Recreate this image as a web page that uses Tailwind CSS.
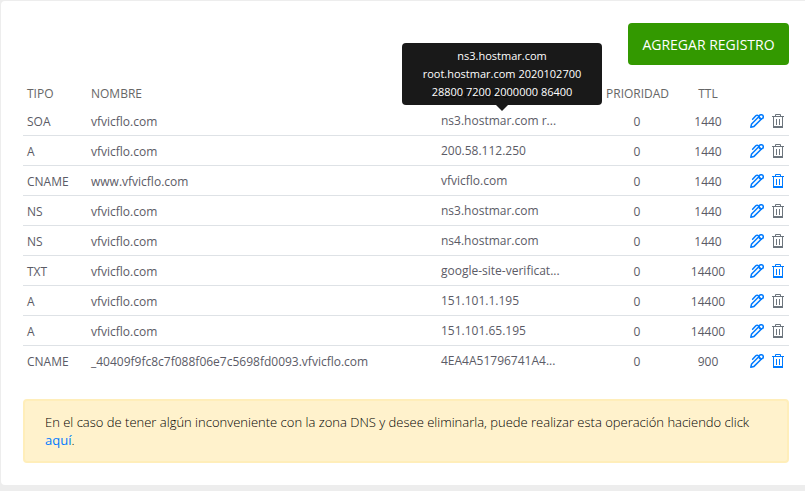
<!DOCTYPE html>
<html lang="es">
<head>
<meta charset="utf-8">
<meta name="viewport" content="width=device-width, initial-scale=1">
<title>Zona DNS</title>
<script src="https://cdn.jsdelivr.net/npm/@tailwindcss/browser@4"></script>
</head>
<body class="min-h-screen bg-[#ededed] pl-px pt-px font-['Open_Sans','Noto_Sans',sans-serif] text-[13px] text-[#5b5b66]">
<svg class="hidden" aria-hidden="true">
  <symbol id="pen" viewBox="0 0 14 14">
    <g fill="none" stroke="currentColor" stroke-width="1.5" stroke-linejoin="round" stroke-linecap="round">
      <path d="M.8 13.2 1.6 10 8.8 2.8M4 12.4 11.2 5.2M.8 13.2 4 12.4"/>
      <circle cx="11.2" cy="2.8" r="2.1"/>
      <path d="M8.8 2.8 11.2 5.2M2.6 5.3 5.8 1.8Q7.2 .4 8.9 2.2"/>
    </g>
  </symbol>
  <symbol id="trash" viewBox="0 0 12 14">
    <path fill="none" stroke="currentColor" d="M0 2.5H12M3.5 2.5V.5H8.5V2.5M1.5 2.5V13H10.5V2.5M4.5 5V11M7.5 5V11"/>
    <path fill="currentColor" d="M1 12H11V14H1Z"/>
  </symbol>
</svg>
<main class="rounded-l-[4px] bg-white py-[22px] pl-[22px] pr-4">
  <div class="flex justify-end">
    <button type="button" class="h-[42px] min-w-[161px] rounded-[4px] bg-[#339900] px-3 text-[14px] text-white">AGREGAR REGISTRO</button>
  </div>
  <table class="mt-4 w-full table-fixed border-collapse">
    <colgroup><col class="w-16"><col><col class="w-[165px]"><col class="w-[70px]"><col class="w-[72px]"><col class="w-[45px]"></colgroup>
    <thead>
      <tr class="h-6 text-left text-[12px] text-[#666]">
        <th class="px-1 pt-0.5 font-normal">TIPO</th><th class="px-1 pt-0.5 font-normal">NOMBRE</th><th class="px-1 pt-0.5 font-normal">CONTENIDO</th><th class="px-1 pt-0.5 text-center font-normal">PRIORIDAD</th><th class="px-1 pt-0.5 text-center font-normal">TTL</th><th class="px-1" aria-label="Acciones"></th>
      </tr>
    </thead>
    <tbody id="records" class="text-[12px]"></tbody>
  </table>
  <p class="mt-6 rounded-[4px] border-2 border-[#ffeeba] bg-[#fff2cc] px-5 py-3 font-light leading-[18px] text-black">En el caso de tener algún inconveniente con la zona DNS y desee eliminarla, puede realizar esta operación haciendo click <a href="#" class="font-normal text-[#007bff]">aquí</a>.</p>
</main>
<script>
const records = [
  ['SOA', 'vfvicflo.com', 'ns3.hostmar.com r...', 1440, false],
  ['A', 'vfvicflo.com', '200.58.112.250', 1440, false],
  ['CNAME', 'www.vfvicflo.com', 'vfvicflo.com', 1440, true],
  ['NS', 'vfvicflo.com', 'ns3.hostmar.com', 1440, false],
  ['NS', 'vfvicflo.com', 'ns4.hostmar.com', 1440, false],
  ['TXT', 'vfvicflo.com', 'google-site-verificat...', 14400, true],
  ['A', 'vfvicflo.com', '151.101.1.195', 14400, false],
  ['A', 'vfvicflo.com', '151.101.65.195', 14400, false],
  ['CNAME', '_40409f9fc8c7f088f06e7c5698fd0093.vfvicflo.com', '4EA4A51796741A4...', 900, true],
];
const tooltip = `<span role="tooltip" class="absolute bottom-full left-1/2 mb-[7px] w-[200px] -translate-x-1/2 rounded-[4px] bg-black/90 px-4 py-1 text-center text-[11px] whitespace-normal leading-[18px] text-white">ns3.hostmar.com root.hostmar.com 2020102700 28800 7200 2000000 86400<svg class="absolute left-1/2 top-full -translate-x-1/2" width="12" height="6" viewBox="0 0 12 6" fill="#000" fill-opacity=".9"><path d="M0 0H12L6 6Z"/></svg></span>`;
document.getElementById('records').innerHTML = records.map(([type, name, content, ttl, removable], i) => `
  <tr class="h-[30px] border-b border-[#dee2e6] last:border-0">
    <td class="px-1 pt-1">${type}</td>
    <td class="px-1 pt-1">${name}</td>
    <td class="px-1 pt-0.5"><span class="relative inline-block w-[122px] whitespace-nowrap">${content}${i ? '' : tooltip}</span></td>
    <td class="px-1 pt-1 text-center">0</td>
    <td class="px-1 pt-1 text-center">${ttl}</td>
    <td class="px-1 pt-0.5"><div class="flex items-center gap-2 pl-[2px]">
      <button type="button" aria-label="Editar" class="text-[#007bff]"><svg class="size-[14px]"><use href="#pen"/></svg></button>
      <button type="button" aria-label="Eliminar" ${removable ? '' : 'disabled'} class="text-[#007bff] disabled:text-[#6c757d]"><svg class="h-[14px] w-3"><use href="#trash"/></svg></button>
    </div></td>
  </tr>`).join('');
</script>
</body>
</html>
